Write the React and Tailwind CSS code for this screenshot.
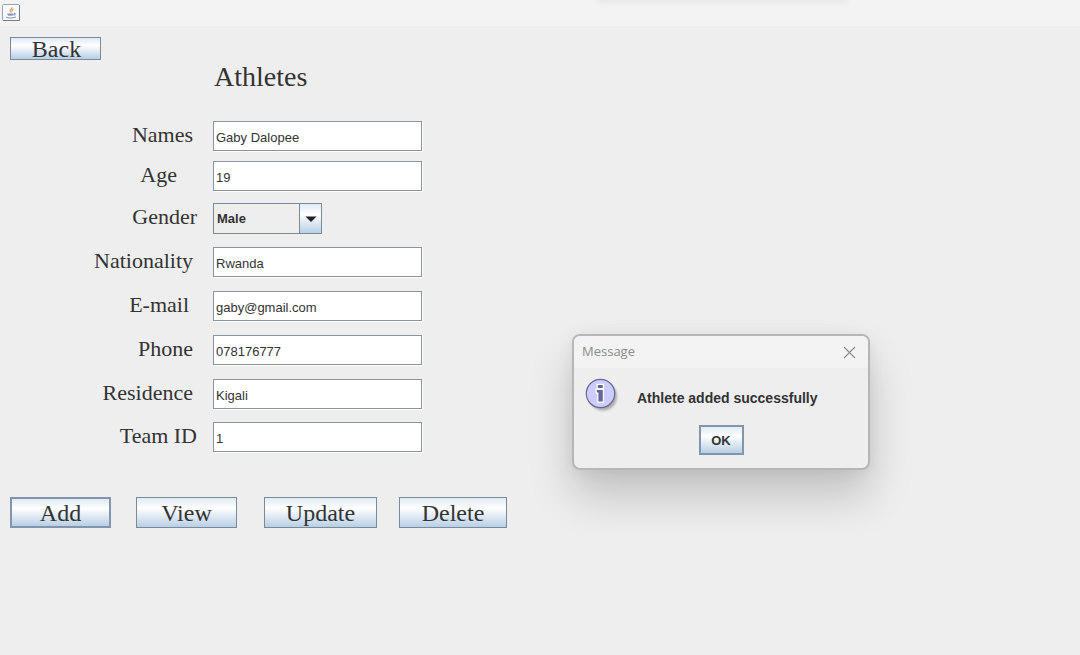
import React from "react";

const serif = "font-['Liberation_Serif',serif]";

const fields = [
  { id: "names", label: "Names", value: "Gaby Dalopee", pad: "pr-5" },
  { id: "age", label: "Age", value: "19", pad: "pr-9" },
  { id: "gender", label: "Gender", options: ["Male", "Female"], pad: "pr-4" },
  { id: "nationality", label: "Nationality", value: "Rwanda", pad: "pr-5" },
  { id: "email", label: "E-mail", value: "gaby@gmail.com", pad: "pr-6" },
  { id: "phone", label: "Phone", value: "078176777", pad: "pr-5" },
  { id: "residence", label: "Residence", value: "Kigali", pad: "pr-5" },
  { id: "team", label: "Team ID", value: "1", pad: "pr-4" },
];

function MetalButton({ children, className = "", focused = false }) {
  return (
    <button
      type="button"
      className={`flex items-center justify-center bg-linear-to-b from-[#e0eaf5] via-white via-35% to-[#b8cfe5] text-[#333333] ${
        focused ? "border-2 border-[#8196ad]" : "border border-[#7a8a99]"
      } ${className}`}
    >
      {children}
    </button>
  );
}

function JavaIcon() {
  return (
    <svg viewBox="0 0 18 17" className="h-[17px] w-[18px]" aria-hidden="true">
      <rect x="0.5" y="0.5" width="17" height="16" rx="1" fill="#f8f9fa" stroke="#9aa4ad" />
      <path d="M1 16.5h16.5V1" fill="none" stroke="#6f7b87" />
      <path d="M9.8 3.2c.9 1.6-2.3 2.3-1.6 3.8.3.6.8.9.7 1.6M11.3 5.200c-1.500.7-1.600 1.500-1 2.500" fill="none" stroke="#e8a468" strokeWidth="1.3" />
      <path d="M5.2 9.400h6.600c-.2 1.200-1 2.200-1.800 2.400H7c-1-.3-1.700-1.200-1.800-2.400z" fill="#7d9bb8" />
      <path d="M12 9.400c1.600-.2 1.500 1.500-.4 1.900M4 13.200c3 .9 7.500.8 9.800-.2" fill="none" stroke="#7d9bb8" strokeWidth="1.2" />
    </svg>
  );
}

function InfoIcon() {
  return (
    <svg viewBox="0 0 36 36" className="h-9 w-9 shrink-0" aria-hidden="true">
      <defs>
        <filter id="soft" x="-30%" y="-30%" width="160%" height="160%">
          <feGaussianBlur stdDeviation="1.3" />
        </filter>
      </defs>
      <circle cx="18" cy="18.5" r="14" fill="#808080" opacity="0.6" filter="url(#soft)" />
      <circle cx="15.5" cy="15.5" r="14.2" fill="#ccccff" stroke="#666699" strokeWidth="1.2" />
      <path
        d="M12.8 7h5v3h-5zM11.8 12h6v11.500h-4.400v-9h-1.600z"
        fill="#666699"
        stroke="#ffffff"
        strokeWidth="2.4"
        paintOrder="stroke"
      />
    </svg>
  );
}

function Field({ field }) {
  return (
    <>
      <label
        htmlFor={field.id}
        className={`${serif} ${field.pad} text-right text-[22px] leading-7 text-[#333333]`}
      >
        {field.label}
      </label>
      {field.options ? (
        <div className="relative h-8 w-[109px]">
          <select
            id={field.id}
            className="h-[31px] w-full appearance-none border border-[#7a8a99] bg-[#eeeeee] pl-[3px] text-[13px] font-bold text-[#333333]"
          >
            {field.options.map((o) => (
              <option key={o}>{o}</option>
            ))}
          </select>
          <span className="pointer-events-none absolute top-0 right-0 flex h-[31px] w-[23px] items-center justify-center border border-[#7a8a99] bg-linear-to-b from-[#e0eaf5] via-white via-35% to-[#b8cfe5]">
            <svg viewBox="0 0 12 6" className="h-[6px] w-3" aria-hidden="true">
              <path d="M0.5 0.5h11L6 6z" fill="#222222" />
            </svg>
          </span>
        </div>
      ) : (
        <input
          id={field.id}
          type="text"
          defaultValue={field.value}
          className="h-[30px] w-[209px] border border-[#8a949f] bg-white pt-[3px] pl-[2px] text-[13px] text-[#333333] shadow-[1px_1px_0_white] outline-none"
        />
      )}
    </>
  );
}

export default function App() {
  return (
    <div className="relative min-h-screen overflow-hidden bg-[#eeeeee] font-['Liberation_Sans',sans-serif] text-[#333333]">
      <header className="relative flex h-[26px] items-start overflow-hidden bg-[#f3f3f3] pt-1 pl-[2px]">
        <JavaIcon />
        <div className="absolute -top-2 left-[600px] h-2 w-[244px] shadow-[0_0_6px_3px_rgba(0,0,0,0.05)]" />
      </header>

      <main className="pt-[11px] pl-[10px]">
        <MetalButton className={`${serif} h-[23px] w-[91px] pl-[2px] text-2xl leading-5`}>Back</MetalButton>
        <h1 className={`${serif} pt-[1px] pl-[204px] text-[28px] leading-8`}>Athletes</h1>

        <form
          className="grid grid-cols-[203px_209px] grid-rows-[40px_42px_44px_44px_44px_44px_43px_31px] items-start pt-7"
          onSubmit={(e) => e.preventDefault()}
        >
          {fields.map((f) => (
            <Field key={f.id} field={f} />
          ))}
        </form>

        <div className={`${serif} grid grid-cols-[126px_128px_135px_108px] pt-11 text-2xl leading-7`}>
          <MetalButton focused className="h-[31px] w-[101px]">Add</MetalButton>
          <MetalButton className="h-[31px] w-[101px]">View</MetalButton>
          <MetalButton className="h-[31px] w-[113px]">Update</MetalButton>
          <MetalButton className="h-[31px] w-[108px]">Delete</MetalButton>
        </div>
      </main>

      <section
        role="dialog"
        aria-labelledby="message-title"
        className="absolute top-[334px] left-[572px] w-[298px] overflow-hidden rounded-lg border-2 border-[#b6b6b6] bg-[#eeeeee] pb-[13px] shadow-[0_26px_44px_rgba(0,0,0,0.19),0_2px_16px_rgba(0,0,0,0.06)]"
      >
        <div className="flex h-8 items-center justify-between bg-[#f3f3f3] pr-3 pl-2">
          <h2 id="message-title" className="font-['Open_Sans',sans-serif] text-[13px] text-[#8c8c8c]">
            Message
          </h2>
          <button type="button" aria-label="Close">
            <svg viewBox="0 0 13 13" className="h-[13px] w-[13px]" aria-hidden="true">
              <path d="M1 1l11 11M12 1L1 12" fill="none" stroke="#8c8c8c" strokeWidth="1.1" />
            </svg>
          </button>
        </div>
        <div className="flex items-center gap-4 pt-[10px] pl-[11px]">
          <InfoIcon />
          <p className="pt-1 text-sm font-bold">Athlete added successfully</p>
        </div>
        <div className="flex justify-center pt-[11px]">
          <MetalButton focused className="h-[30px] w-[45px] pt-[2px] text-[13px] font-bold">OK</MetalButton>
        </div>
      </section>
    </div>
  );
}
